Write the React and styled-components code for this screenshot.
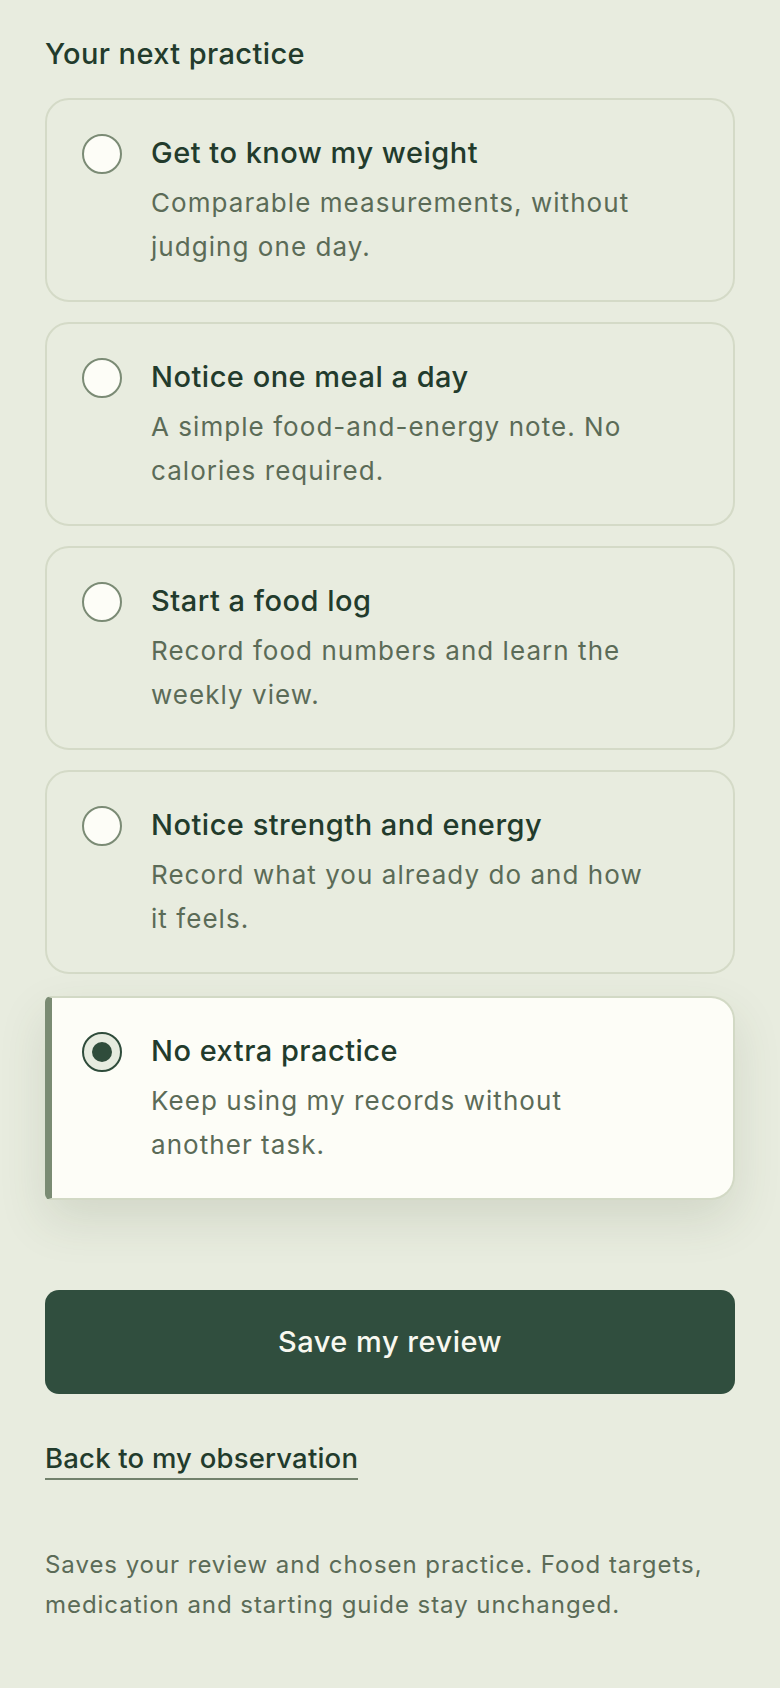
import React, { useState } from "react"
import styled, { createGlobalStyle, css } from "styled-components"

const GlobalStyle = createGlobalStyle`
  html, body {
    margin: 0;
    padding: 0;
    background: #e8ecdf;
  }
  body {
    font-family: Inter, "Noto Sans", "Liberation Sans", sans-serif;
    color: #223b2c;
    -webkit-font-smoothing: antialiased;
  }
  * { box-sizing: border-box; }
`

const Page = styled.main`
  min-height: 1688px;
  padding: 35px 45px 60px;
  background: #e8ecdf;
`

const Heading = styled.h2`
  margin: 0 0 25px;
  font-size: 29px;
  line-height: 1.3;
  font-weight: 500;
  letter-spacing: 0.4px;
  color: #223b2c;
`

const Options = styled.div`
  display: flex;
  flex-direction: column;
  gap: 20px;
`

const Option = styled.label`
  display: flex;
  align-items: flex-start;
  gap: 29px;
  padding: 34px 36px 32px 35px;
  border: 2px solid #d4dac7;
  border-radius: 24px;
  background: transparent;
  cursor: pointer;

  ${p => p.$checked && css`
    margin-top: 2px;
    background: #fdfdf7;
    border-color: #d2d9c5;
    border-left: 7px solid #7a8b73;
    padding-left: 30px;
    border-radius: 6px 24px 24px 6px;
    box-shadow: 0 20px 48px rgba(60, 80, 50, 0.13);
  `}
`

const Radio = styled.span`
  flex: none;
  width: 40px;
  height: 40px;
  border-radius: 50%;
  border: 2px solid #7b8b75;
  background: #fdfdf7;
  display: flex;
  align-items: center;
  justify-content: center;

  ${p => p.$checked && css`
    border: 2.5px solid #2f4c3b;
    background: #e6ebdf;
    &::after {
      content: "";
      width: 20px;
      height: 20px;
      border-radius: 50%;
      background: #2f4c3b;
    }
  `}
`

const HiddenInput = styled.input`
  position: absolute;
  opacity: 0;
  width: 0;
  height: 0;
`

const Text = styled.div`
  display: flex;
  flex-direction: column;
  gap: 10px;
`

const Title = styled.span`
  font-size: 29px;
  line-height: 1.3;
  font-weight: 500;
  letter-spacing: 0.5px;
  color: #223b2c;
`

const Desc = styled.span`
  max-width: 500px;
  font-size: 26px;
  line-height: 1.66;
  letter-spacing: 1.05px;
  color: #5b6b57;
`

const SaveButton = styled.button`
  display: block;
  width: 100%;
  height: 104px;
  margin-top: 90px;
  border: none;
  border-radius: 14px;
  background: #304e3e;
  color: #f8f8f0;
  font-family: inherit;
  font-size: 29px;
  font-weight: 500;
  letter-spacing: 0.5px;
  cursor: pointer;
`

const BackLink = styled.a`
  display: inline-block;
  margin-top: 47px;
  padding-bottom: 2px;
  font-size: 27.5px;
  line-height: 1.3;
  font-weight: 500;
  letter-spacing: 0.2px;
  color: #223b2c;
  text-decoration: none;
  border-bottom: 2px solid #72826c;
`

const Note = styled.p`
  margin: 65px 0 0;
  font-size: 24px;
  line-height: 1.65;
  letter-spacing: 0.95px;
  color: #5b6b57;
`

const practices = [
  { id: "weight", title: "Get to know my weight", desc: "Comparable measurements, without judging one day." },
  { id: "meal", title: "Notice one meal a day", desc: "A simple food-and-energy note. No calories required." },
  { id: "log", title: "Start a food log", desc: "Record food numbers and learn the weekly view." },
  { id: "strength", title: "Notice strength and energy", desc: "Record what you already do and how it feels." },
  { id: "none", title: "No extra practice", desc: "Keep using my records without another task." },
]

export default function App() {
  const [choice, setChoice] = useState("none")

  return (
    <>
      <GlobalStyle />
      <Page>
        <Heading>Your next practice</Heading>
        <Options role="radiogroup">
          {practices.map(p => {
            const checked = choice === p.id
            return (
              <Option key={p.id} $checked={checked}>
                <HiddenInput
                  type="radio"
                  name="practice"
                  value={p.id}
                  checked={checked}
                  onChange={() => setChoice(p.id)}
                />
                <Radio $checked={checked} />
                <Text>
                  <Title>{p.title}</Title>
                  <Desc>{p.desc}</Desc>
                </Text>
              </Option>
            )
          })}
        </Options>
        <SaveButton type="button">Save my review</SaveButton>
        <BackLink href="#">Back to my observation</BackLink>
        <Note>
          Saves your review and chosen practice. Food targets, medication and starting guide stay unchanged.
        </Note>
      </Page>
    </>
  )
}
